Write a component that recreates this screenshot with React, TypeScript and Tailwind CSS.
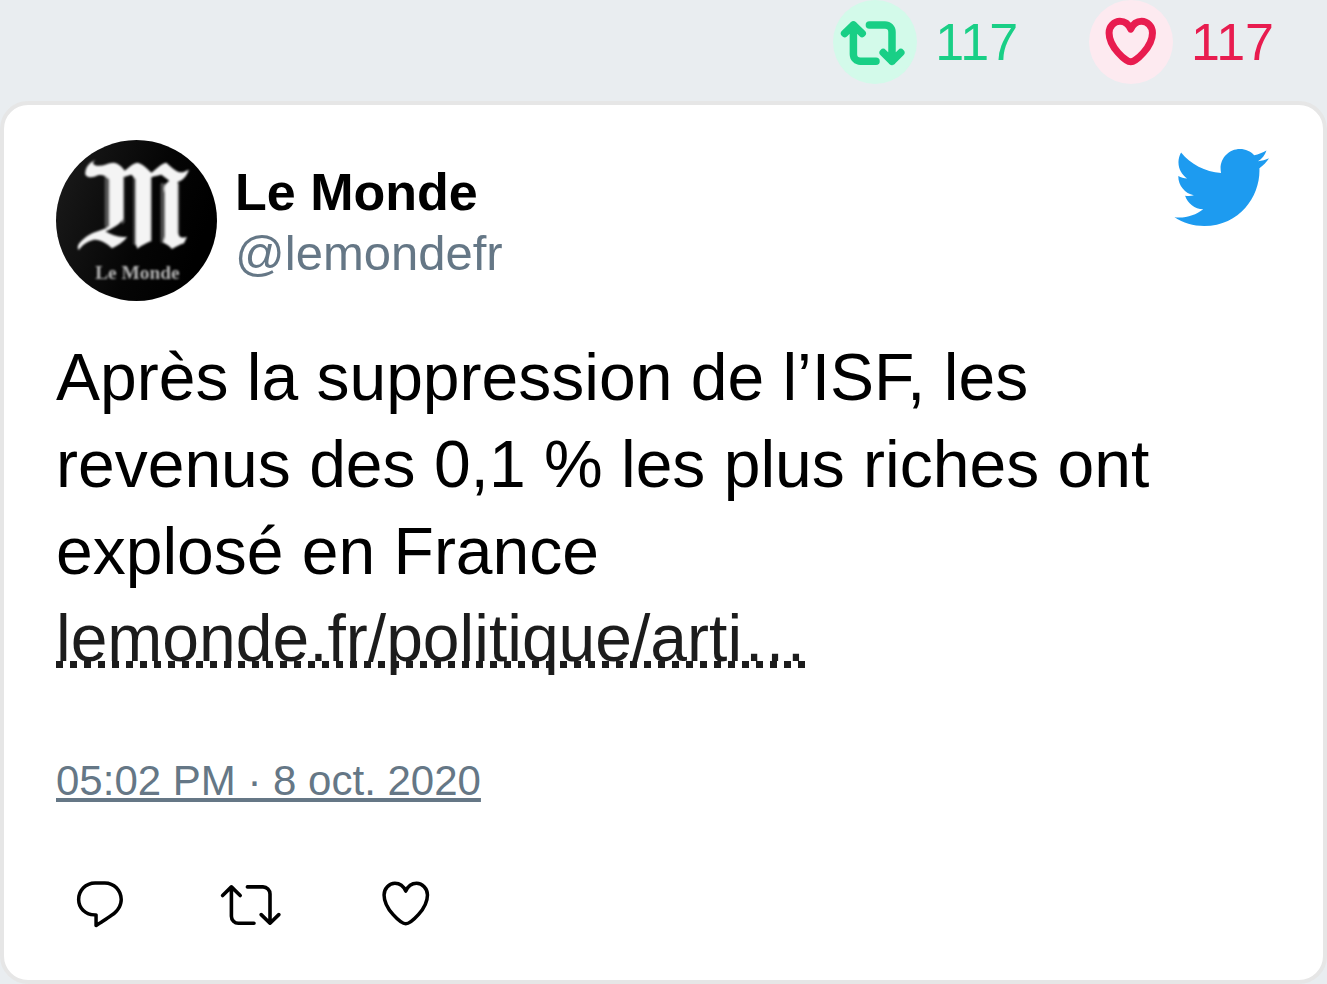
import React from "react";

const HEART =
  "M12 20.9C10 20.9 2.7 14.6 2.7 8.5 2.7 5.8 4.9 3.5 7.35 3.5 9.9 3.5 11.4 5.5 12 6.9 12.6 5.5 14.1 3.5 16.65 3.5 19.1 3.5 21.3 5.8 21.3 8.5 21.3 14.6 14 20.9 12 20.9Z";

function HeartIcon({ weight }: { weight: number }) {
  return (
    <svg viewBox="0.1 0.4 24 24" className="h-14 w-14 shrink-0" fill="none" stroke="currentColor" strokeWidth={weight} strokeLinejoin="round" aria-hidden="true">
      <path d={HEART} />
    </svg>
  );
}

function RetweetIcon({ weight }: { weight: number }) {
  return (
    <svg viewBox="2.3 -1 70 56" className="h-14 w-[70px] shrink-0" fill="none" stroke="currentColor" strokeWidth={weight} strokeLinecap="round" strokeLinejoin="round" aria-hidden="true">
      <path d="M6.9 18.5 15.7 9.9l8.8 8.6M15.7 9.9V39.2a7 7 0 0 0 7 7H38.3" />
      <path d="M63.1 37.6 54.3 46.2l-8.8-8.6M54.3 46.2V16.9a7 7 0 0 0-7-7H31.7" />
    </svg>
  );
}

function ReplyIcon() {
  return (
    <svg viewBox="0 0 24 24" className="h-14 w-14 shrink-0" fill="currentColor" aria-hidden="true">
      <path d="M14.046 2.242l-4.148-.01h-.002c-4.374 0-7.8 3.427-7.8 7.802 0 4.098 3.186 7.206 7.465 7.37v3.828c0 .108.044.286.12.403.142.225.384.347.632.347.138 0 .277-.038.402-.118.264-.168 6.473-4.14 8.088-5.506 1.902-1.61 3.04-3.97 3.043-6.312v-.017c-.006-4.367-3.43-7.787-7.8-7.788zm3.787 12.972c-1.134.96-4.862 3.405-6.772 4.643V16.67c0-.414-.335-.75-.75-.75h-.396c-3.66 0-6.318-2.476-6.318-5.886 0-3.534 2.768-6.302 6.3-6.302l4.147.01h.002c3.532 0 6.3 2.766 6.302 6.296-.003 1.91-.942 3.844-2.514 5.176z" />
    </svg>
  );
}

function TwitterLogo() {
  return (
    <svg viewBox="0.1 0.1 24 24" className="-mt-0.5 h-[100px] w-[100px] shrink-0 text-[#1d9bf0]" fill="currentColor" role="img" aria-label="Twitter">
      <path d="M23.643 4.937c-.835.37-1.732.62-2.675.733.962-.576 1.7-1.49 2.048-2.578-.9.534-1.897.922-2.958 1.13-.85-.904-2.06-1.47-3.4-1.47-2.572 0-4.658 2.086-4.658 4.66 0 .364.042.718.12 1.06-3.873-.195-7.304-2.05-9.602-4.868-.4.69-.63 1.49-.63 2.342 0 1.616.823 3.043 2.072 3.878-.764-.025-1.482-.234-2.11-.583v.06c0 2.257 1.605 4.14 3.737 4.568-.392.106-.803.162-1.227.162-.3 0-.593-.028-.877-.082.593 1.85 2.313 3.198 4.352 3.234-1.595 1.25-3.604 1.995-5.786 1.995-.376 0-.747-.022-1.112-.065 2.062 1.323 4.51 2.093 7.14 2.093 8.57 0 13.255-7.098 13.255-13.254 0-.2-.005-.402-.014-.602.91-.658 1.7-1.477 2.323-2.41z" />
    </svg>
  );
}

function Avatar() {
  return (
    <svg viewBox="18 30 483 483" className="h-[161px] w-[161px] shrink-0 rounded-full" role="img" aria-label="Le Monde">
      <defs>
        <linearGradient id="shade" x1="0" y1="0" x2="1" y2="0.35">
          <stop offset="0" stopColor="#1c1c1c" />
          <stop offset="0.65" stopColor="#050505" />
          <stop offset="1" stopColor="#000" />
        </linearGradient>
        <filter id="soft" x="-10%" y="-10%" width="120%" height="120%">
          <feGaussianBlur stdDeviation="3" />
        </filter>
      </defs>
      <rect x="18" y="30" width="483" height="483" fill="url(#shade)" />
      <g filter="url(#soft)">
        <path d="M164 140H180V290H164ZM216 142H224V276L216 284ZM250 138H262V344H250ZM300 140H306V334H300ZM332 160H344V338H332ZM380 160H388V320H380Z" fill="#555" />
        <path d="M136 90C126 98 128 104 140 107C158 110 172 99 190 98C204 99 214 108 224 122C234 116 246 100 262 98C276 100 290 114 304 128C318 118 332 101 349 98C360 108 374 122 390 127C400 128 408 122 417 119C410 138 400 150 383 156V310C388 326 398 324 411 320L402 340C390 344 378 350 366 357C358 348 350 342 340 338L345 318V190C340 170 344 162 358 152L334 134L302 142V334C288 340 276 346 262 356L258 344V148L244 134L219 142V266C212 282 190 294 166 304C186 316 208 324 232 320C220 336 204 346 186 355C164 334 140 322 118 334C104 340 94 350 86 360C76 346 96 330 112 318C136 302 160 302 178 288V148C168 138 156 132 144 136C128 144 114 144 106 134C104 116 116 98 136 90Z" fill="#f4f4f4" />
      </g>
      <text x="262" y="447" textAnchor="middle" className="font-['Liberation_Serif',serif] text-[58px] font-bold" fill="#b5b5b5" filter="url(#soft)">
        Le Monde
      </text>
    </svg>
  );
}

export default function App() {
  return (
    <div className="min-h-screen bg-[#e9edf0] font-['Liberation_Sans',Arial,sans-serif] text-black">
      <div className="flex justify-end gap-[71px] pr-[53px] text-[52px] leading-[84px]">
        <div className="flex items-center gap-[18px] text-[#19cf86]">
          <span className="flex h-[84px] w-[84px] items-center justify-center rounded-full bg-[#d3faea]">
            <RetweetIcon weight={7.5} />
          </span>
          <span>117</span>
        </div>
        <div className="flex items-center gap-[18px] text-[#e81c4f]">
          <span className="flex h-[84px] w-[84px] items-center justify-center rounded-full bg-[#fdeaf0]">
            <HeartIcon weight={3} />
          </span>
          <span>117</span>
        </div>
      </div>

      <article className="mt-[17px] rounded-[28px] border-4 border-[#e6e6e6] bg-white px-[52px] pt-[35px] pb-12">
        <header className="flex items-start justify-between">
          <div className="flex items-center gap-[18px]">
            <Avatar />
            <div className="pt-1 leading-[61px]">
              <div className="text-[52px] font-bold">Le Monde</div>
              <div className="text-[49px] text-[#657786]">@lemondefr</div>
            </div>
          </div>
          <TwitterLogo />
        </header>

        <p className="mt-[33px] text-[66px] leading-[87px]">
          Après la suppression de l’ISF, les
          <br />
          revenus des 0,1 % les plus riches ont
          <br />
          explosé en France
          <br />
          <a
            href="#article"
            className="bg-[linear-gradient(to_right,#1c1c1c_50%,transparent_50%)] bg-[length:14px_7px] bg-[position:0_60px] bg-repeat-x text-[#1c1c1c]"
          >
            lemonde.fr/politique/arti…
          </a>
        </p>

        <div className="mt-[71px] text-[42px] leading-[56px] text-[#657786]">
          <a href="#status" className="underline">
            05:02 PM · 8 oct. 2020
          </a>
        </div>

        <div className="mt-[67px] flex gap-[90px] pl-4">
          <button type="button" aria-label="Reply">
            <ReplyIcon />
          </button>
          <button type="button" aria-label="Retweet">
            <RetweetIcon weight={3.6} />
          </button>
          <button type="button" aria-label="Like">
            <HeartIcon weight={1.5} />
          </button>
        </div>
      </article>
    </div>
  );
}
